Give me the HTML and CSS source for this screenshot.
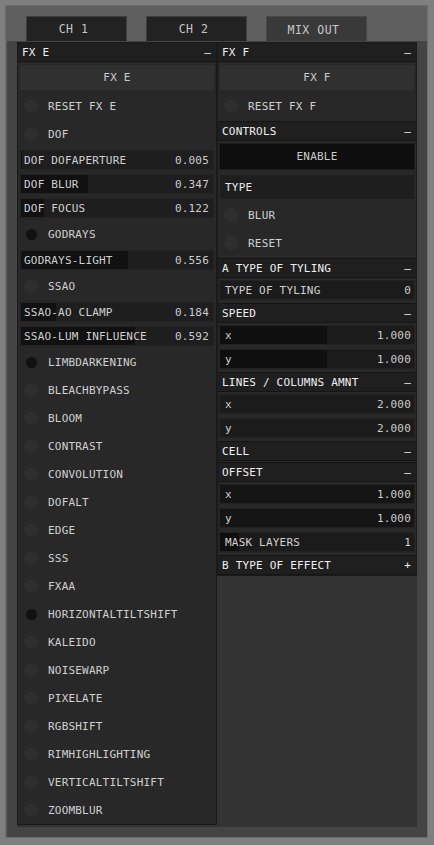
FILE: index.html
```html
<!DOCTYPE html>
<html>
<head>
<meta charset="utf-8">
<link rel="stylesheet" href="styles.css">
</head>
<body>
<div class="frame">
  <div class="tabs">
    <div class="tab">CH 1</div>
    <div class="tab">CH 2</div>
    <div class="tab active">MIX OUT</div>
  </div>
  <div class="content">
    <div class="scroll">
      <div class="panel">
        <div class="ph"><span>FX E</span><span>–</span></div>
        <div class="btn">FX E</div>
        <div class="toggle"><span class="dot"></span><span>RESET FX E</span></div>
        <div class="toggle"><span class="dot"></span><span>DOF</span></div>
        <div class="slider"><div class="fill" style="width:0.5%"></div><span class="lbl">DOF DOFAPERTURE</span><span class="val">0.005</span></div>
        <div class="slider"><div class="fill" style="width:34.7%"></div><span class="lbl">DOF BLUR</span><span class="val">0.347</span></div>
        <div class="slider"><div class="fill" style="width:12.2%"></div><span class="lbl">DOF FOCUS</span><span class="val">0.122</span></div>
        <div class="toggle on"><span class="dot"></span><span>GODRAYS</span></div>
        <div class="slider"><div class="fill" style="width:55.6%"></div><span class="lbl">GODRAYS-LIGHT</span><span class="val">0.556</span></div>
        <div class="toggle"><span class="dot"></span><span>SSAO</span></div>
        <div class="slider"><div class="fill" style="width:18.4%"></div><span class="lbl">SSAO-AO CLAMP</span><span class="val">0.184</span></div>
        <div class="slider"><div class="fill" style="width:59.2%"></div><span class="lbl">SSAO-LUM INFLUENCE</span><span class="val">0.592</span></div>
        <div class="toggle on"><span class="dot"></span><span>LIMBDARKENING</span></div>
        <div class="toggle"><span class="dot"></span><span>BLEACHBYPASS</span></div>
        <div class="toggle"><span class="dot"></span><span>BLOOM</span></div>
        <div class="toggle"><span class="dot"></span><span>CONTRAST</span></div>
        <div class="toggle"><span class="dot"></span><span>CONVOLUTION</span></div>
        <div class="toggle"><span class="dot"></span><span>DOFALT</span></div>
        <div class="toggle"><span class="dot"></span><span>EDGE</span></div>
        <div class="toggle"><span class="dot"></span><span>SSS</span></div>
        <div class="toggle"><span class="dot"></span><span>FXAA</span></div>
        <div class="toggle on"><span class="dot"></span><span>HORIZONTALTILTSHIFT</span></div>
        <div class="toggle"><span class="dot"></span><span>KALEIDO</span></div>
        <div class="toggle"><span class="dot"></span><span>NOISEWARP</span></div>
        <div class="toggle"><span class="dot"></span><span>PIXELATE</span></div>
        <div class="toggle"><span class="dot"></span><span>RGBSHIFT</span></div>
        <div class="toggle"><span class="dot"></span><span>RIMHIGHLIGHTING</span></div>
        <div class="toggle"><span class="dot"></span><span>VERTICALTILTSHIFT</span></div>
        <div class="toggle"><span class="dot"></span><span>ZOOMBLUR</span></div>
      </div>
      <div class="panel">
        <div class="ph"><span>FX F</span><span>–</span></div>
        <div class="btn">FX F</div>
        <div class="toggle"><span class="dot"></span><span>RESET FX F</span></div>
        <div class="fh"><span>CONTROLS</span><span>–</span></div>
        <div class="enable">ENABLE</div>
        <div class="label">TYPE</div>
        <div class="toggle"><span class="dot"></span><span>BLUR</span></div>
        <div class="toggle"><span class="dot"></span><span>RESET</span></div>
        <div class="fh"><span>A TYPE OF TYLING</span><span>–</span></div>
        <div class="row"><span class="lbl">TYPE OF TYLING</span><span class="val">0</span></div>
        <div class="fh"><span>SPEED</span><span>–</span></div>
        <div class="row"><div class="fill" style="width:55%"></div><span class="lbl">x</span><span class="val">1.000</span></div>
        <div class="row"><div class="fill" style="width:55%"></div><span class="lbl">y</span><span class="val">1.000</span></div>
        <div class="fh"><span>LINES / COLUMNS AMNT</span><span>–</span></div>
        <div class="row"><span class="lbl">x</span><span class="val">2.000</span></div>
        <div class="row"><span class="lbl">y</span><span class="val">2.000</span></div>
        <div class="fh"><span>CELL</span><span>–</span></div>
        <div class="fh"><span>OFFSET</span><span>–</span></div>
        <div class="row"><div class="fill dim" style="width:100%"></div><span class="lbl">x</span><span class="val">1.000</span></div>
        <div class="row"><div class="fill dim" style="width:100%"></div><span class="lbl">y</span><span class="val">1.000</span></div>
        <div class="row"><div class="fill" style="width:10%"></div><span class="lbl">MASK LAYERS</span><span class="val">1</span></div>
        <div class="fh"><span>B TYPE OF EFFECT</span><span>+</span></div>
      </div>
    </div>
  </div>
</div>
</body>
</html>
```
FILE: styles.css
```css
html, body {
  margin: 0;
  padding: 0;
}
body {
  background: #7f7f7f;
  font-family: "DejaVu Sans Mono", "Liberation Mono", monospace;
  font-size: 11px;
  letter-spacing: 0.2px;
  color: #d2d2d2;
}
.frame {
  margin: 5px;
  width: 423px;
  height: 833px;
  box-sizing: border-box;
  border: 1px solid #6d6d6d;
  background: #5f5f5f;
  display: flex;
  flex-direction: column;
}
.tabs {
  display: flex;
  gap: 19px;
  padding: 10px 0 0 20px;
  height: 35px;
  box-sizing: border-box;
}
.tab {
  width: 101px;
  height: 25px;
  box-sizing: border-box;
  background: #222222;
  border: 1px solid #3e3e3e;
  border-bottom: none;
  display: flex;
  align-items: center;
  justify-content: center;
  padding-right: 6px;
  color: #c8c8c8;
  font-size: 11.5px;
  letter-spacing: 0.5px;
}
.tab.active {
  background: #393939;
  border-color: #484848;
  padding-top: 2px;
}
.content {
  flex: 1;
  margin-left: 1px;
  background: #444444;
  padding: 1px 10px 10px 10px;
  display: flex;
}
.scroll {
  flex: 1;
  background: #333333;
  display: grid;
  grid-template-columns: 200px 200px;
  align-items: start;
}
.panel {
  background: #282828;
  border: 1px solid #1a1a1a;
  display: flex;
  flex-direction: column;
}
.ph, .fh {
  display: flex;
  align-items: center;
  justify-content: space-between;
  background: #1f1f1f;
  color: #efefef;
  box-sizing: border-box;
  padding: 0 5px 0 4px;
  flex: none;
}
.ph {
  height: 19px;
  border-bottom: 1px solid #151515;
}
.fh {
  height: 20px;
  margin-top: 1px;
  border-top: 1px solid #151515;
  border-bottom: 1px solid #151515;
}
.btn {
  margin: 3px 2px 2px;
  height: 25px;
  background: #303030;
  display: flex;
  align-items: center;
  justify-content: center;
  color: #cacaca;
  flex: none;
}
.toggle {
  height: 28px;
  display: flex;
  align-items: center;
  gap: 10px;
  padding-left: 6px;
  color: #d0d0d0;
  flex: none;
}
.dot {
  width: 14px;
  height: 14px;
  border-radius: 50%;
  background: #2e2e2e;
}
.toggle.on .dot {
  width: 11px;
  height: 11px;
  margin: 0 1.5px;
  background: #111111;
}
.slider, .row {
  position: relative;
  height: 20px;
  box-sizing: border-box;
  display: flex;
  align-items: center;
  justify-content: space-between;
  flex: none;
}
.slider {
  margin: 2px 2px;
  background: #1e1e1e;
  border: 1px solid #232323;
  padding: 0 4px 0 3px;
}
.row {
  margin: 2px 1px;
  background: #1b1b1b;
  border: 1px solid #222222;
  padding: 0 3px 0 5px;
}
.fill {
  position: absolute;
  left: 0;
  top: 0;
  bottom: 0;
  background: #111111;
}
.row .fill {
  background: #0f0f0f;
}
.row .fill.dim {
  background: #151515;
}
.lbl, .val {
  position: relative;
  color: #d0d0d0;
}
.val {
  color: #cccccc;
}
.enable {
  margin: 2px 1px 0;
  height: 27px;
  box-sizing: border-box;
  background: #0e0e0e;
  border: 1px solid #1c1c1c;
  display: flex;
  align-items: center;
  justify-content: center;
  color: #cacaca;
  flex: none;
}
.label {
  margin: 5px 2px 2px;
  height: 24px;
  background: #1e1e1e;
  display: flex;
  align-items: center;
  padding-left: 5px;
  color: #ececec;
  flex: none;
}
```
